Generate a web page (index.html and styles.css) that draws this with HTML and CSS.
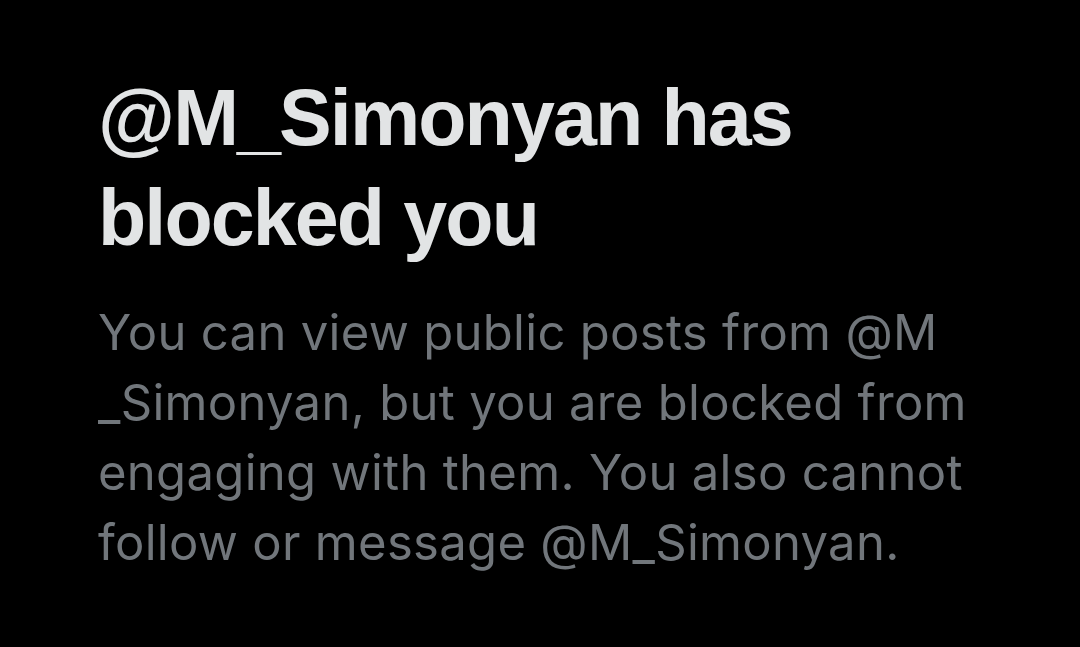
FILE: index.html
```html
<!DOCTYPE html>
<html lang="en">

<head>
    <meta charset="UTF-8" />
    <meta name="viewport" content="width=device-width, initial-scale=1.0" />
    <title>Blocked</title>
    <link rel="stylesheet" href="styles.css">
</head>

<body>
    <div class="blocked">
        <h2 class="blocked-title">@M_Simonyan has<br>blocked you</h2>
        <p class="blocked-text">
            You can view public posts from @M<br>_Simonyan, but you are blocked from<br>engaging with them. You also cannot<br>follow or message @M_Simonyan.
        </p>
    </div>
</body>

</html>
```

FILE: styles.css
```css
* {
    margin: 0;
    padding: 0;
    box-sizing: border-box;
}

body {
    background-color: #000;
    font-family: "Liberation Sans", Arial, sans-serif;
    min-height: 100vh;
}

.blocked {
    padding: 68px 0 0 98px;
}

.blocked-title {
    color: #e2e4e5;
    font-size: 79px;
    font-weight: 700;
    line-height: 100px;
    letter-spacing: -1.9px;
    white-space: nowrap;
}

.blocked-text {
    margin-top: 30px;
    color: #71767b;
    font-family: Inter, "Liberation Sans", sans-serif;
    font-size: 49px;
    line-height: 70px;
    letter-spacing: 0.3px;
    white-space: nowrap;
}
```
